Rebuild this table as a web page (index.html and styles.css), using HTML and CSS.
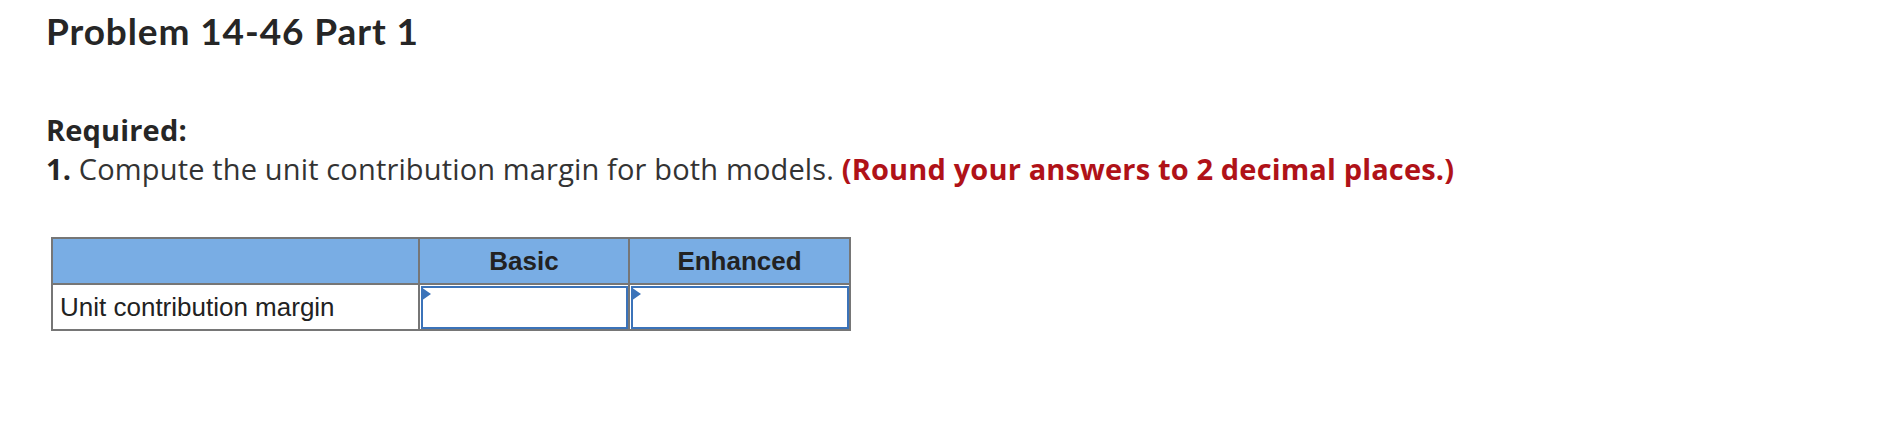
FILE: index.html
```html
<!DOCTYPE html>
<html lang="en">
<head>
<meta charset="utf-8">
<title>Problem 14-46 Part 1</title>
<link rel="stylesheet" href="styles.css">
</head>
<body>
<main class="page">
  <h1 class="title">Problem 14-46 Part 1</h1>
  <section class="prompt">
    <p class="line"><strong>Required:</strong></p>
    <p class="line"><strong>1.</strong> Compute the unit contribution margin for both models. <strong class="note">(Round your answers to 2 decimal places.)</strong></p>
  </section>
  <div class="grid">
    <div class="cell head"></div>
    <div class="cell head center">Basic</div>
    <div class="cell head center">Enhanced</div>
    <div class="cell label">Unit contribution margin</div>
    <div class="cell entry"><div class="input"></div></div>
    <div class="cell entry"><div class="input"></div></div>
  </div>
</main>
</body>
</html>
```
FILE: styles.css
```css
html, body {
  margin: 0;
  padding: 0;
  background: #ffffff;
}

.page {
  padding: 9px 0 0 46px;
  font-family: Lato, "Open Sans", sans-serif;
  color: #2b2b2b;
}

.title {
  margin: 0;
  font-size: 37px;
  line-height: 44px;
  font-weight: 700;
  letter-spacing: 0.9px;
  color: #262626;
}

.prompt {
  margin-top: 57px;
}

.line {
  margin: 0;
  font-family: "Open Sans", Lato, sans-serif;
  font-size: 29px;
  line-height: 39px;
  letter-spacing: 0.15px;
  color: #333333;
}

.line strong {
  font-weight: 700;
  color: #262626;
}

.line .note {
  color: #b01218;
}

.grid {
  margin-top: 49px;
  margin-left: 5px;
  width: 796px;
  display: grid;
  grid-template-columns: 365px 208px 219px;
  grid-template-rows: 44px 44px;
  gap: 2px;
  border: 2px solid #767676;
  background: #767676;
  font-family: "Liberation Sans", Arial, sans-serif;
  font-size: 26px;
  color: #222222;
}

.cell {
  background: #ffffff;
  display: flex;
  align-items: center;
}

.head {
  background: #79ade4;
  font-weight: 700;
}

.center {
  justify-content: center;
}

.label {
  padding-left: 7px;
}

.entry {
  padding: 1px 0 0 1px;
  align-items: stretch;
}

.input {
  position: relative;
  flex: 1;
  border: 2px solid #3b73b9;
  background: #ffffff;
}

.input::before {
  content: "";
  position: absolute;
  top: -1px;
  left: -2px;
  border-left: 10px solid #3b73b9;
  border-top: 7px solid transparent;
  border-bottom: 7px solid transparent;
}
```
